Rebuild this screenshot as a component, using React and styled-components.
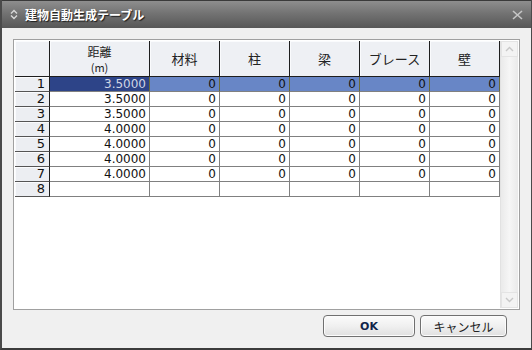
import React from "react";
import styled, { createGlobalStyle } from "styled-components";

const Global = createGlobalStyle`
  html, body { margin: 0; padding: 0; background: #f0f0f0; }
  body { font-family: "Noto Sans CJK JP", "Liberation Sans", sans-serif; }
`;

const Window = styled.div`
  width: 532px;
  height: 350px;
  box-sizing: border-box;
  display: flex;
  flex-direction: column;
  border-left: 2px solid #4a4a4a;
  border-right: 1px solid #4a4a4a;
  border-bottom: 2px solid #3c3c3c;
  background: #f0f0f0;
`;

const TitleBar = styled.div`
  height: 28px;
  flex: none;
  display: flex;
  align-items: center;
  padding: 0 8px 0 8px;
  background: linear-gradient(#8e8e8e 0%, #737373 45%, #575757 100%);
  border-top: 1px solid #3a3a3a;
  box-sizing: border-box;
`;

const Title = styled.span`
  margin-left: 7px;
  color: #ffffff;
  font-weight: bold;
  font-size: 12px;
  text-shadow: 1px 1px 1px #1a1a1a;
  flex: 1;
`;

const Body = styled.div`
  flex: 1;
  display: flex;
  flex-direction: column;
  padding: 11px 11px 0 11px;
`;

const GridBox = styled.div`
  height: 271px;
  box-sizing: border-box;
  border: 1px solid #a0a0a0;
  background: #fff;
  display: flex;
  padding: 1px 0 0 1px;
`;

const TableArea = styled.div`
  flex: 1;
  display: flex;
  flex-direction: column;
`;

const Row = styled.div`
  display: grid;
  grid-template-columns: 35px 100px 70px 70px 70px 70px 70px;
  height: ${(p) => p.h}px;
`;

const HeadCell = styled.div`
  box-sizing: border-box;
  background: #eef0f4;
  border-right: 1px solid #1e1e1e;
  border-bottom: 1px solid #1e1e1e;
  box-shadow: inset 1px 1px 0 #fafbfd;
  display: flex;
  flex-direction: column;
  align-items: center;
  justify-content: center;
  font-size: 13px;
  line-height: 16px;
  color: #222;
`;

const HeadLine = styled.span`
  display: block;
  font-size: ${(p) => (p.small ? 11 : 12)}px;
  line-height: ${(p) => (p.small ? 14 : 16)}px;
`;

const RowHead = styled.div`
  box-sizing: border-box;
  background: #eceef2;
  border-right: 1px solid #1e1e1e;
  border-bottom: 1px solid #555;
  box-shadow: inset 1px 1px 0 #fafbfd;
  font-size: 13px;
  line-height: 14px;
  text-align: right;
  padding-right: 4px;
  color: #111;
  font-family: "DejaVu Sans", "Liberation Sans", sans-serif;
`;

const Cell = styled.div`
  box-sizing: border-box;
  border-right: 1px solid ${(p) => (p.sel ? "#6b6b3a" : "#808080")};
  border-bottom: 1px solid #808080;
  background: ${(p) => (p.sel ? (p.first ? "#2d4488" : "#6886c6") : "#fff")};
  color: ${(p) => (p.sel && p.first ? "#d0d6e4" : "#111")};
  font-family: "DejaVu Sans", "Liberation Sans", sans-serif;
  font-size: 12px;
  line-height: 14px;
  text-align: right;
  padding-right: 3px;
`;

const Scrollbar = styled.div`
  width: 17px;
  margin: 0 1px 1px 0;
  display: flex;
  flex-direction: column;
  justify-content: space-between;
  background: linear-gradient(90deg, #eaeaea, #f6f6f6 50%, #eaeaea);
  border-left: 1px solid #e2e2e2;
`;

const ArrowBtn = styled.div`
  height: 16px;
  display: flex;
  align-items: center;
  justify-content: center;
  background: #f3f3f3;
  border: 1px solid #e4e4e4;
  box-sizing: border-box;
`;

const ButtonBar = styled.div`
  display: flex;
  justify-content: flex-end;
  gap: 5px;
  padding: 5px 13px 0 0;
`;

const Button = styled.button`
  width: ${(p) => p.w}px;
  height: 22px;
  box-sizing: border-box;
  border: 1px solid #707070;
  border-radius: 4px;
  background: linear-gradient(#fbfbfb 0%, #f0f0f0 50%, #e0e0e0 100%);
  box-shadow: inset 0 0 0 1px #fcfcfc;
  font-family: ${(p) => (p.bold ? '"DejaVu Sans", "Liberation Sans", sans-serif' : '"Noto Sans CJK JP", sans-serif')};
  font-size: ${(p) => (p.bold ? "11px" : "12px")};
  font-weight: ${(p) => (p.bold ? "bold" : "normal")};
  color: ${(p) => (p.bold ? "#10244a" : "#222")};
  padding: 0;
`;

const data = [
  "3.5000",
  "3.5000",
  "3.5000",
  "4.0000",
  "4.0000",
  "4.0000",
  "4.0000",
  null,
];

const heads = ["材料", "柱", "梁", "ブレース", "壁"];

export default function App() {
  return (
    <>
      <Global />
      <Window>
        <TitleBar>
          <svg width="8" height="11" viewBox="0 0 8 11">
            <path d="M1 4.5 L4 1.5 L7 4.5 M1 6.5 L4 9.5 L7 6.5" fill="none" stroke="#d8d8d8" strokeWidth="1.4" />
          </svg>
          <Title>建物自動生成テーブル</Title>
          <svg width="11" height="10" viewBox="0 0 11 10">
            <path d="M1 1 L10 9 M10 1 L1 9" stroke="#c6c6c6" strokeWidth="1.6" />
          </svg>
        </TitleBar>
        <Body>
          <GridBox>
            <TableArea>
              <Row h={36}>
                <HeadCell />
                <HeadCell>
                  <HeadLine>距離</HeadLine>
                  <HeadLine small>(m)</HeadLine>
                </HeadCell>
                {heads.map((h) => (
                  <HeadCell key={h}>{h}</HeadCell>
                ))}
              </Row>
              {data.map((d, i) => (
                <Row h={15} key={i}>
                  <RowHead>{i + 1}</RowHead>
                  <Cell sel={i === 0} first>
                    {d}
                  </Cell>
                  {heads.map((h) => (
                    <Cell key={h} sel={i === 0}>
                      {d ? "0" : ""}
                    </Cell>
                  ))}
                </Row>
              ))}
            </TableArea>
            <Scrollbar>
              <ArrowBtn>
                <svg width="9" height="6" viewBox="0 0 9 6">
                  <path d="M1 5 L4.5 1.5 L8 5" fill="none" stroke="#c8c8c8" strokeWidth="1.4" />
                </svg>
              </ArrowBtn>
              <ArrowBtn>
                <svg width="9" height="6" viewBox="0 0 9 6">
                  <path d="M1 1 L4.5 4.5 L8 1" fill="none" stroke="#c8c8c8" strokeWidth="1.4" />
                </svg>
              </ArrowBtn>
            </Scrollbar>
          </GridBox>
          <ButtonBar>
            <Button w={92} bold>
              OK
            </Button>
            <Button w={87}>キャンセル</Button>
          </ButtonBar>
        </Body>
      </Window>
    </>
  );
}
